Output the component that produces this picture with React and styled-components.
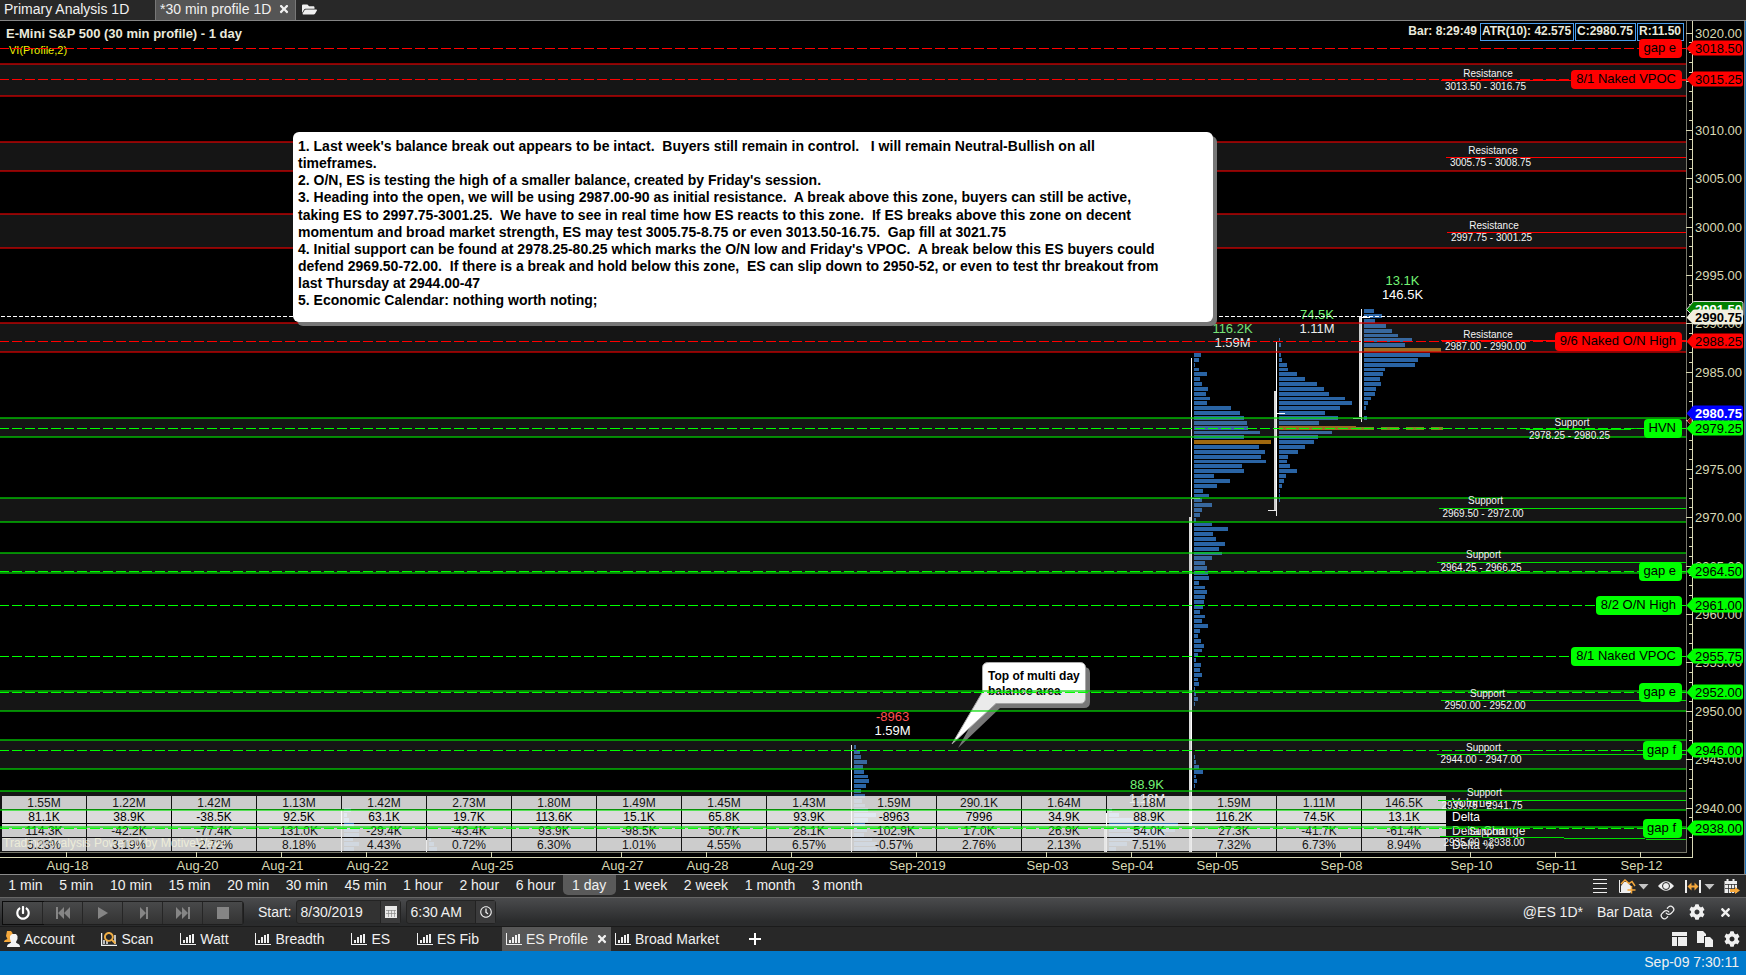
import styled, { createGlobalStyle } from "styled-components"
import { FaFolderOpen, FaPowerOff, FaCog, FaRegClock, FaTimes, FaSearch } from "react-icons/fa"
import { FiLink } from "react-icons/fi"

const GlobalStyle = createGlobalStyle`
    * {
        box-sizing: border-box;
    }
    body {
        margin: 0;
        background: #000;
        overflow: hidden;
        font-family: "Liberation Sans", Arial, sans-serif;
    }
`
const Page = styled.div`
    display: flex;
    flex-direction: column;
    width: 1746px;
    height: 975px;
    background: #282828;
    color: #f0f0f0;
    font-size: 14px;
    white-space: pre;
`
const TopTabs = styled.div`
    display: flex;
    height: 21px;
    background: #282828;
    border-bottom: 1px solid #848484;
`
const TopTab = styled.div`
    display: flex;
    align-items: center;
    gap: 7px;
    height: 20px;
    width: ${p => p.$width}px;
    padding: 0 0 2px 4px;
    background: ${p => p.$active ? "#555" : "transparent"};
    border: solid #777;
    border-width: ${p => p.$active ? "0 1px" : "0"};
`
const FolderButton = styled.div`
    padding: 2px 0 0 6px;
    svg {
        display: block;
    }
`
const ChartArea = styled.div`
    position: relative;
    height: 853px;
    background: #000;
    border-right: 1px solid #1a6fb5;
`
const Layer = styled.svg`
    position: absolute;
    left: 0;
    top: 0;
    display: block;
    font-family: "Liberation Sans", Arial, sans-serif;
`
const InfoBar = styled.div`
    position: absolute;
    right: 61px;
    top: 2px;
    display: flex;
    gap: 1px;
    font-size: 12px;
    font-weight: bold;
    line-height: 15px;
    color: #e9e9dc;
`
const InfoText = styled.div`
    padding: 1px 2px;
`
const InfoBox = styled.div`
    height: 18px;
    width: ${p => p.$width}px;
    padding-left: 1px;
    border: 1px solid #4a9ff0;
`
const VolumeTable = styled.div`
    position: absolute;
    left: 2px;
    top: 775px;
    display: grid;
    grid-template-columns: repeat(17, 84px) 150px;
    grid-auto-rows: 13px;
    gap: 1px;
    font-size: 12px;
    line-height: 14px;
`
const Cell = styled.div`
    background: rgba(255, 255, 255, 0.86);
    color: #000;
    text-align: center;
`
const RowName = styled.div`
    padding-left: 5px;
    color: #fff;
`
const Note = styled.div`
    position: absolute;
    left: 293px;
    top: 111px;
    width: 920px;
    height: 190px;
    padding: 6px 5px;
    background: #fff;
    border-radius: 6px;
    box-shadow: 4px 4px 0 #777;
    color: #000;
    font-size: 14px;
    font-weight: bold;
    line-height: 17.14px;
`
const TimeframeBar = styled.div`
    display: flex;
    justify-content: space-between;
    height: 24px;
    background: #282828;
    border-top: 1px solid #8a8a8a;
    border-bottom: 1px solid #666;
`
const Group = styled.div`
    display: flex;
    align-items: center;
`
const Timeframes = styled.div`
    display: flex;
`
const Timeframe = styled.div`
    height: 20px;
    padding: 0 ${p => p.$active ? 9.3 : 8.3}px;
    margin: 0 ${p => p.$active ? -1 : 0}px;
    line-height: 20px;
    border-radius: 0 0 5px 5px;
    background: ${p => p.$active ? "#5a5a5a" : "transparent"};
`
const PlaybackBar = styled.div`
    display: flex;
    justify-content: space-between;
    height: 29px;
    background: linear-gradient(#4a4b4d, #2a2b2c 85%);
    border-bottom: 1px solid #1b1b1b;
`
const Buttons = styled.div`
    display: flex;
    height: 24px;
    margin: 3px 0 0 2px;
    border: 1px solid #1e1e1e;
    border-radius: 3px;
`
const PlayButton = styled.div`
    display: flex;
    align-items: center;
    justify-content: center;
    width: 40px;
    background: linear-gradient(#48494a, #333);
    border-right: 1px solid #262626;
    color: ${p => p.$on ? "#fff" : "#858585"};
    outline: ${p => p.$on ? "1px solid #0c0c0c" : "none"};
`
const FieldLabel = styled.div`
    margin: 0 5px 0 14px;
    line-height: 28px;
`
const Field = styled.div`
    display: flex;
    width: ${p => p.$width}px;
    height: 24px;
    margin: 2px 5px 0 0;
    padding-left: 3px;
    background: #323232;
    border: 1px solid #232323;
    border-radius: 3px;
    line-height: 23px;
`
const FieldButton = styled.div`
    display: flex;
    align-items: center;
    justify-content: center;
    width: 20px;
    margin-left: auto;
    background: #3b3b3c;
    border-left: 1px solid #222;
`
const WorkspaceTabs = styled.div`
    display: flex;
    justify-content: space-between;
    height: 24px;
    background: #282828;
`
const Workspace = styled.div`
    display: flex;
    align-items: center;
    gap: 4px;
    height: 24px;
    padding: 0 ${p => p.$pad || 22.9}px 1px 4px;
    background: ${p => p.$active ? "#575757" : "transparent"};
`
const StatusBar = styled.div`
    height: 24px;
    padding-right: 7px;
    background: #007acc;
    text-align: right;
    line-height: 23px;
`
const RightTools = styled.div`
    display: flex;
    align-items: center;
    gap: ${p => p.$gap}px;
    padding-right: ${p => p.$pad}px;
`

const toY = price => Math.floor(33.3 + (3020 - price) * 9.6875)

const zones = [
    { top: 64, bottom: 96, name: "Resistance", range: "3013.50 - 3016.75", x: 1488, nameY: 77, rangeY: 90, from: 1441, y1: 80.5, y2: 80.5 },
    { top: 142, bottom: 171, name: "Resistance", range: "3005.75 - 3008.75", x: 1493, nameY: 154, rangeY: 166, from: 1446, y1: 157.5, y2: 157.5 },
    { top: 214, bottom: 248, name: "Resistance", range: "2997.75 - 3001.25", x: 1494, nameY: 229, rangeY: 241, from: 1447, y1: 232.5, y2: 232.5 },
    { top: 323, bottom: 352, name: "Resistance", range: "2987.00 - 2990.00", x: 1488, nameY: 338, rangeY: 350, from: 1441, y1: 340.5, y2: 340.5 },
    { top: 418, bottom: 437, name: "Support", range: "2978.25 - 2980.25", x: 1572, nameY: 426, rangeY: 439, from: 1526, y1: 430, y2: 428.5 },
    { top: 498, bottom: 522, name: "Support", range: "2969.50 - 2972.00", x: 1485.5, nameY: 504, rangeY: 517, from: 1439, y1: 508, y2: 509 },
    { top: 553, bottom: 573, name: "Support", range: "2964.25 - 2966.25", x: 1483.5, nameY: 558, rangeY: 571, from: 1437, y1: 562, y2: 563 },
    { top: 691, bottom: 711, name: "Support", range: "2950.00 - 2952.00", x: 1487.5, nameY: 697, rangeY: 709, from: 1441, y1: 700, y2: 701 },
    { top: 740, bottom: 769, name: "Support", range: "2944.00 - 2947.00", x: 1483.5, nameY: 751, rangeY: 763, from: 1437, y1: 754.5, y2: 754.5 },
    { top: 791, bottom: 810, name: "Support", range: "2939.75 - 2941.75", x: 1484.5, nameY: 796, rangeY: 809, from: 1438, y1: 800.5, y2: 800.5 },
    { top: 827, bottom: 853, name: "Support", range: "2935.00 - 2938.00", x: 1486.5, nameY: 835, rangeY: 846, from: 1440, y1: 836.5, y2: 839.5 },
]

const levels = [
    { y: 48, label: "gap e", left: 1639, price: "3018.50", red: true },
    { y: 79, label: "8/1 Naked VPOC", left: 1571, price: "3015.25", red: true },
    { y: 341, label: "9/6 Naked O/N High", left: 1555, price: "2988.25", red: true },
    { y: 428, label: "HVN", left: 1644, price: "2979.25" },
    { y: 571, label: "gap e", left: 1639, price: "2964.50" },
    { y: 605, label: "8/2 O/N High", left: 1596, price: "2961.00" },
    { y: 656, label: "8/1 Naked VPOC", left: 1571, price: "2955.75" },
    { y: 692, label: "gap e", left: 1639, price: "2952.00" },
    { y: 750, label: "gap f", left: 1643, price: "2946.00" },
    { y: 828, label: "gap f", left: 1643, price: "2938.00" },
]

// start is the row index of the first bar, row 0 sits at y 355
const profiles = [
    { x: 344, start: 94, bars: [7, 3, 5, 10, 15, 15, 9, 15, 10] },
    { x: 429, start: 100, bars: [2, 5, 8] },
    { x: 854, start: 81, bars: [2, 6, 7, 13, 9, 10, 14, 15, 12, 7, 11, 8, 11, 14, 22, 14, 11, 13, 10, 18, 23, 23] },
    { x: 1109, start: 94, bars: [3, 10, 24, 69, 66, 56, 28, 18, 7] },
    {
        x: 1194, start: 0, poc: 18,
        bars: [7, 5, 1, 5, 13, 6, 8, 14, 12, 16, 13, 37, 46, 50, 53, 54, 66, 50, 77, 65, 71, 67, 72, 48, 50, 20, 36, 23, 9, 15,
            8, 18, 8, 6, 2, 18, 34, 19, 22, 31, 25, 28, 18, 11, 13, 14, 15, 5, 11, 13, 11, 10, 9, 6, 11, 8, 14, 6, 4, 7, 10, 8, 4, 2,
            7, 6, 8, 4, 5, 1, 2, 4, 1, 0, 0, 0, 0, 0, 0, 0, 0, 0, 0, 1, 2, 5, 9, 2, 3, 1]
    },
    {
        x: 1279, start: -3, poc: 18,
        bars: [1, 2, 0, 2, 3, 8, 9, 18, 26, 38, 45, 50, 66, 73, 61, 46, 59, 40, 77, 53, 39, 35, 26, 19, 9, 8, 11, 18, 7, 5, 3, 1, 1, 1]
    },
    {
        x: 1364, start: -9, poc: 8,
        bars: [10, 18, 11, 22, 28, 34, 48, 41, 77, 66, 54, 51, 21, 19, 16, 17, 12, 11, 7, 4, 2, 0, 3]
    },
]

const candles = [
    { x: 341, high: 810, low: 852 },
    { x: 426, high: 840, low: 852 },
    { x: 851, high: 745, low: 852 },
    { x: 1106, high: 813, low: 852, top: 829, bottom: 852 },
    { x: 1191, high: 358, low: 852, top: 517, bottom: 852, right: 498 },
    { x: 1276, high: 342, low: 516, top: 391, bottom: 510, right: 413, left: 510 },
    { x: 1361, high: 309, low: 422, top: 317, bottom: 417, right: 317, left: 418 },
]

const totals = [
    { x: 1402.5, y: 285, delta: "13.1K", volume: "146.5K" },
    { x: 1317, y: 319, delta: "74.5K", volume: "1.11M" },
    { x: 1232.5, y: 333, delta: "116.2K", volume: "1.59M" },
    { x: 892.5, y: 721, delta: "-8963", volume: "1.59M", negative: true },
    { x: 1147, y: 789, delta: "88.9K", volume: "1.18M" },
]

const dates = [[66, "Aug-18"], [196, "Aug-20"], [281, "Aug-21"], [366, "Aug-22"], [491, "Aug-25"], [621, "Aug-27"], [706, "Aug-28"], [791, "Aug-29"],
[916, "Sep-2019"], [1046, "Sep-03"], [1131, "Sep-04"], [1216, "Sep-05"], [1340, "Sep-08"], [1470, "Sep-10"], [1555, "Sep-11"], [1640, "Sep-12"]]

const rows = [
    ["1.55M", "1.22M", "1.42M", "1.13M", "1.42M", "2.73M", "1.80M", "1.49M", "1.45M", "1.43M", "1.59M", "290.1K", "1.64M", "1.18M", "1.59M", "1.11M", "146.5K", "Volume"],
    ["81.1K", "38.9K", "-38.5K", "92.5K", "63.1K", "19.7K", "113.6K", "15.1K", "65.8K", "93.9K", "-8963", "7996", "34.9K", "88.9K", "116.2K", "74.5K", "13.1K", "Delta"],
    ["114.3K", "-42.2K", "-77.4K", "131.0K", "-29.4K", "-43.4K", "93.9K", "-98.5K", "50.7K", "28.1K", "-102.9K", "17.0K", "26.9K", "54.0K", "27.3K", "-41.7K", "-61.4K", "Delta Change"],
    ["5.23%", "3.19%", "-2.72%", "8.18%", "4.43%", "0.72%", "6.30%", "1.01%", "4.55%", "6.57%", "-0.57%", "2.76%", "2.13%", "7.51%", "7.32%", "6.73%", "8.94%", "Delta %"],
]

const noteText = `1. Last week's balance break out appears to be intact.  Buyers still remain in control.   I will remain Neutral-Bullish on all
timeframes.
2. O/N, ES is testing the high of a smaller balance, created by Friday's session.
3. Heading into the open, we will be using 2987.00-90 as initial resistance.  A break above this zone, buyers can still be active,
taking ES to 2997.75-3001.25.  We have to see in real time how ES reacts to this zone.  If ES breaks above this zone on decent
momentum and broad market strength, ES may test 3005.75-8.75 or even 3013.50-16.75.  Gap fill at 3021.75
4. Initial support can be found at 2978.25-80.25 which marks the O/N low and Friday's VPOC.  A break below this ES buyers could
defend 2969.50-72.00.  If there is a break and hold below this zone,  ES can slip down to 2950-52, or even to test thr breakout from
last Thursday at 2944.00-47
5. Economic Calendar: nothing worth noting;`

const timeframes = ["1 min", "5 min", "10 min", "15 min", "20 min", "30 min", "45 min", "1 hour", "2 hour", "6 hour", "1 day", "1 week", "2 week", "1 month", "3 month"]

const Profile = ({ x, start, poc, bars }) => (
    <g>
        {bars.map((width, i) => {
            const y = 355 + (start + i) * 4.845
            const top = Math.round(y - 2)
            return <rect key={i} x={x} y={top} width={width} height={Math.round(y + 4.845 - 2) - top - 1} fill={i === poc ? "#a0690f" : "#2a64a4"} />
        })}
    </g>
)

const Candle = ({ x, high, low, top, bottom, left, right }) => (
    <g fill="#fff">
        {top && <rect x={x - 2} y={top} width="2" height={bottom - top} fill="#dadada" />}
        <rect x={x} y={high} width="1" height={low - high} />
        {left && <rect x={x - 8} y={left} width="8" height="1" />}
        {right && <rect x={x + 1} y={right} width="8" height="1" />}
    </g>
)

const PriceTag = ({ y, price, fill, color = "#000", bold, stroke = "none" }) => (
    <g>
        <path d={`M1686.5 ${y + 0.5}L1692.5 ${y - 6.5}Q1693 ${y - 7.5} 1695 ${y - 7.5}H1741Q1743 ${y - 7.5} 1743 ${y - 5.5}V${y + 5.5}Q1743 ${y + 7.5} 1741 ${y + 7.5}H1695Q1693 ${y + 7.5} 1692.5 ${y + 6.5}Z`} fill={fill} stroke={stroke} />
        <text x="1695" y={y + 5} fontSize="13" fontWeight={bold ? "bold" : "normal"} textLength="47" fill={color}>{price}</text>
    </g>
)

const BaseLayer = () => (
    <Layer width="1745" height="853" viewBox="0 21 1745 853">
        <g shapeRendering="crispEdges">
            {profiles.map(p => <Profile key={p.x} {...p} />)}
            {candles.map(c => <Candle key={c.x} {...c} />)}
            <path d="M1356 428.5H1374M1381 428.5H1399M1406 428.5H1424M1431 428.5H1443" stroke="#7f8a10" strokeWidth="3" />
        </g>
        <path d="M992 667H1084Q1090 667 1090 673V702Q1090 708 1084 708H1000L958 748L988 695V671Z" fill="#777" />
        <path d="M988.5 662.5H1080Q1085.5 662.5 1085.5 668V698Q1085.5 703.5 1080 703.5H996L952 744L982.5 692V668Q982.5 662.5 988.5 662.5Z" fill="#fff" stroke="#aaa" />
        <g fontSize="12" fontWeight="bold">
            <text x="988" y="680">Top of multi day</text>
            <text x="988" y="695">balance area</text>
        </g>
        <g fontSize="13" textAnchor="middle">
            {totals.map(t => (
                <g key={t.x}>
                    <text x={t.x} y={t.y} fill={t.negative ? "#ff5050" : "#74f474"}>{t.delta}</text>
                    <text x={t.x} y={t.y + 14} fill="#fff">{t.volume}</text>
                </g>
            ))}
        </g>
        <text x="6" y="38" fontSize="13" fontWeight="bold" fill="#e9e9dc">E-Mini S&amp;P 500 (30 min profile) - 1 day</text>
        <text x="9" y="54" fontSize="11" fill="#f0f000">VI(Profile,2)</text>
    </Layer>
)

const OverlayLayer = () => {
    const prices = []
    for (let p = 3020; p >= 2937; p--) prices.push(p)
    return (
        <Layer width="1745" height="853" viewBox="0 21 1745 853">
            <g shapeRendering="crispEdges">
                {zones.map(z => {
                    const color = z.name === "Resistance" ? "rgba(230,0,0,.6)" : "rgba(0,225,0,.6)"
                    return (
                        <g key={z.top}>
                            <rect x="0" y={z.top} width="1686" height={z.bottom - z.top} fill="rgba(128,128,128,.16)" />
                            <rect x="0" y={z.top - 1} width="1686" height="2" fill={color} />
                            {z.bottom < 852 && <rect x="0" y={z.bottom - 1} width="1686" height="2" fill={color} />}
                            <line x1={z.from} x2="1686" y1={z.y1} y2={z.y2} stroke={z.name === "Resistance" ? "#f00" : "#00e000"} />
                        </g>
                    )
                })}
                <line x1="0" x2="1686" y1="316.5" y2="316.5" stroke="#fff" strokeDasharray="4 2" strokeDashoffset="-1" />
                {levels.map(l => (
                    <g key={l.y} stroke={l.red ? "#f00" : "#0f0"}>
                        <line x1="0" x2="1686" y1={l.y + 0.5} y2={l.y + 0.5} strokeDasharray="10 3" strokeDashoffset="1" />
                        <line x1="1682" x2="1686" y1={l.y + 0.5} y2={l.y + 0.5} />
                    </g>
                ))}
                <path d="M0 852.5H1686.5V21" fill="none" stroke="#77776a" />
                <path d="M0 857.5H1692.5V21" fill="none" stroke="#d8d8b4" />
                {prices.map(p => <rect key={p} x={p % 5 ? 1689 : 1686} y={toY(p)} width={p % 5 ? 3 : 6} height="1" fill="#d8d8b4" />)}
                {dates.map(([x]) => <rect key={x} x={x} y="852" width="1" height="5" fill="#d8d8b4" />)}
                <rect x="1744" y="21" width="1" height="853" fill="#777" />
            </g>
            {zones.map(z => (
                <g key={z.top} fontSize="10" textAnchor="middle" fill="#f4f4f4">
                    <text x={z.x} y={z.nameY}>{z.name}</text>
                    <text x={z.x - 2.5} y={z.rangeY}>{z.range}</text>
                </g>
            ))}
            <g fontSize="13" fill="#d8d8b4">
                {prices.filter(p => p % 5 === 0).map(p => <text key={p} x="1695" y={toY(p) + 5}>{p + ".00"}</text>)}
                {dates.map(([x, name]) => <text key={x} x={x + 1.5} y="870" textAnchor="middle">{name}</text>)}
            </g>
            {levels.map(l => (
                <g key={l.y}>
                    <rect x={l.left} y={l.y - 9} width={1682 - l.left} height="19" rx="4" fill={l.red ? "#f00" : "#0f0"} />
                    <text x="1676" y={l.y + 4} fontSize="13" textAnchor="end">{l.label}</text>
                </g>
            ))}
            <path d="M1687 421L1692 416V426Z" fill="#900" stroke="#ccc" strokeWidth=".5" />
            <PriceTag y={309} price="2991.50" fill="#008000" color="#fff" bold stroke="#ddd" />
            <PriceTag y={317} price="2990.75" fill="#f2efdf" bold />
            <PriceTag y={413} price="2980.75" fill="#00f" color="#fff" bold />
            {levels.map(l => <PriceTag key={l.y} y={l.y} price={l.price} fill={l.red ? "#f00" : "#0f0"} />)}
            <text x="3" y="847" fontSize="12" fill="rgba(255,255,225,.65)">Trading Analysis Powered by MotiveWave</text>
        </Layer>
    )
}

const ChartIcon = () => (
    <svg width="16" height="12" viewBox="0 0 16 12" fill="#f0f0f0" shapeRendering="crispEdges">
        <path d="M0 0h1v11h15v1H0zM3 7h2v3H3zM6 4h2v6H6zM9 2h2v8H9zM12 1h2v9h-2z" />
    </svg>
)

const AccountIcon = () => (
    <svg width="16" height="16" viewBox="0 0 16 16">
        <path d="M3 0h4l1.500 2v3L7 8l1 3H0c0-2 2-2.500 3.500-3L2 5z" fill="#f5a83c" />
        <path d="M8 3h4l1.500 2v3L12 11c0 2 4 1 4 5H3c0-4 4-3 4-5L6 8V5z" fill="#f4f4f4" />
    </svg>
)

const ScanIcon = () => (
    <svg width="16" height="14" viewBox="0 0 16 14">
        <path d="M.5 1v12.500H16M3 12V8M6 12V9M14 12V3" fill="none" stroke="#f0f0f0" strokeWidth="1.5" />
        <g transform="translate(3 0)"><FaSearch size={12} color="#f0ae45" /></g>
    </svg>
)

const CalendarIcon = () => (
    <svg width="12" height="12" viewBox="0 0 12 12">
        <path d="M0 0h12v12H0z" fill="#e8e8e8" />
        <path d="M1 4.500h10M1 7.500h10M3.500 4v7M6.500 4v7M9.500 4v7" stroke="#888" strokeWidth=".7" />
    </svg>
)

const playShapes = [
    "M0 0h2v12H0zM8 0v12L2 6zM14 0v12L8 6z",
    "M2 0L12 6 2 12z",
    "M4 0l6 6-6 6zM10 0h2v12h-2z",
    "M0 0l6 6-6 6zM6 0l6 6-6 6zM12 0h2v12h-2z",
    "M1 0h12v12H1z",
]

const ChartTools = () => (
    <svg width="153" height="20" viewBox="1593 876 153 20" fill="#eee">
        <path d="M1593 879.500h14M1593 883.500h14M1593 888.500h14M1593 892.500h14" stroke="#eee" />
        <path d="M1619.500 880v12.500h11" fill="none" stroke="#eee" />
        <path d="M1621 892v-6l3-4h3l4 4v6z" />
        <path d="M1621 884l4-4 4 3.500 3-2 3 4.500M1631.500 886v7.500M1627.500 890h8" fill="none" stroke="#f5a83c" strokeWidth="1.500" />
        <path d="M1638.500 884h10l-5 5.500zM1704.500 884h10l-5 5.500z" fill="#c4c4c4" />
        <path d="M1658 886q8-9.500 16 0q-8 9.500-16 0z" />
        <circle cx="1666" cy="886" r="3.500" fill="none" stroke="#282828" />
        <path d="M1685 880h2v13h-2zM1699 880h2v13h-2z" />
        <path d="M1687.500 886.500l4-4v3h3v-3l4 4-4 4v-3h-3v3z" fill="#f5a83c" />
        <path d="M1724.500 881h2v-2h2v2h4v-2h2v2h2.500v12h-12.500z" />
        <path d="M1725 884.500h12M1725 888.500h12M1728.500 884v9M1731.500 884v9M1734.500 884v9" stroke="#333" strokeWidth=".8" />
        <path d="M1730 889h5v-2l5 3.500-5 3.500v-2h-5z" fill="#f5a83c" />
    </svg>
)

export default function App() {
    return (
        <Page>
            <GlobalStyle />
            <TopTabs>
                <TopTab $width={155}>Primary Analysis 1D</TopTab>
                <TopTab $width={141} $active>*30 min profile 1D<FaTimes size={12} /></TopTab>
                <FolderButton><FaFolderOpen size={15} /></FolderButton>
            </TopTabs>
            <ChartArea>
                <BaseLayer />
                <InfoBar>
                    <InfoText>Bar: 8:29:49</InfoText>
                    <InfoBox $width={94}>ATR(10): 42.575</InfoBox>
                    <InfoBox $width={61}>C:2980.75</InfoBox>
                    <InfoBox $width={47}>R:11.50</InfoBox>
                </InfoBar>
                <VolumeTable>
                    {rows.map(row => row.map((value, i) => i < 17
                        ? <Cell key={i}>{value}</Cell>
                        : <RowName key={i}>{value}</RowName>))}
                </VolumeTable>
                <OverlayLayer />
                <Note>{noteText}</Note>
            </ChartArea>
            <TimeframeBar>
                <Timeframes>
                    {timeframes.map(t => <Timeframe key={t} $active={t === "1 day"}>{t}</Timeframe>)}
                </Timeframes>
                <Group>
                    <ChartTools />
                </Group>
            </TimeframeBar>
            <PlaybackBar>
                <Timeframes>
                    <Buttons>
                        <PlayButton $on><FaPowerOff size={14} /></PlayButton>
                        {playShapes.map(d => (
                            <PlayButton key={d}>
                                <svg width="14" height="12" viewBox="0 0 14 12" fill="currentColor"><path d={d} /></svg>
                            </PlayButton>
                        ))}
                    </Buttons>
                    <FieldLabel>Start:</FieldLabel>
                    <Field $width={105}>8/30/2019<FieldButton><CalendarIcon /></FieldButton></Field>
                    <Field $width={90}>6:30 AM<FieldButton><FaRegClock size={12} /></FieldButton></Field>
                </Timeframes>
                <RightTools $gap={14} $pad={14}>
                    <span>@ES 1D*</span>
                    <Group>Bar Data  <FiLink size={15} /></Group>
                    <FaCog size={16} />
                    <FaTimes size={13} />
                </RightTools>
            </PlaybackBar>
            <WorkspaceTabs>
                <Timeframes>
                    <Workspace><AccountIcon />Account</Workspace>
                    <Workspace><ScanIcon />Scan</Workspace>
                    <Workspace><ChartIcon />Watt</Workspace>
                    <Workspace><ChartIcon />Breadth</Workspace>
                    <Workspace><ChartIcon />ES</Workspace>
                    <Workspace><ChartIcon />ES Fib</Workspace>
                    <Workspace $active $pad={3}><ChartIcon />ES Profile <FaTimes size={12} /></Workspace>
                    <Workspace $pad={26}><ChartIcon />Broad Market</Workspace>
                    <Workspace>
                        <svg width="12" height="12" viewBox="0 0 12 12"><path d="M5 0h2v5h5v2H7v5H5V7H0V5h5z" fill="#fff" /></svg>
                    </Workspace>
                </Timeframes>
                <RightTools $gap={10} $pad={6}>
                    <svg width="15" height="14" viewBox="0 0 15 14" fill="#eee"><path d="M0 0h15v4H0zM0 5h5v9H0zM6 5h9v9H6z" /></svg>
                    <svg width="17" height="16" viewBox="0 0 17 16" fill="#eee"><path d="M0 0h6l3 3v2H7v7H0zM8 6h5l3 3v7H8z" /></svg>
                    <FaCog size={16} />
                </RightTools>
            </WorkspaceTabs>
            <StatusBar>Sep-09 7:30:11</StatusBar>
        </Page>
    )
}
